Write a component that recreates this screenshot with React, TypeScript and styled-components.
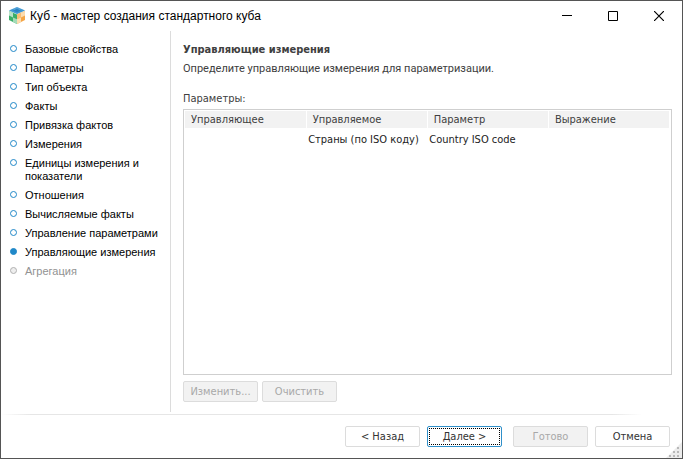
import React from "react";
import styled, { createGlobalStyle, css } from "styled-components";

const GlobalStyle = createGlobalStyle`
  * { box-sizing: border-box; }
  body {
    margin: 0;
    background: #fff;
    font-family: "DejaVu Sans Condensed", "DejaVu Sans", sans-serif;
    font-size: 11px;
    line-height: 13px;
    color: #404040;
  }
  button { font: inherit; }
`;

const Window = styled.div`
  display: flex;
  flex-direction: column;
  min-height: 100vh;
  border: 1px solid #555;
  background: #fff;
  position: relative;
`;

const TitleBar = styled.header`
  display: flex;
  align-items: center;
  height: 29px;
  padding-left: 8px;
`;

const Title = styled.h1`
  flex: 1;
  margin: 0 0 0 5px;
  font: 400 12px/16px "Liberation Sans", sans-serif;
  color: #000;
`;

const CaptionButton = styled.button`
  display: flex;
  align-items: center;
  justify-content: center;
  width: 46px;
  height: 29px;
  padding: 0;
  border: 0;
  background: transparent;
`;

const Body = styled.div`
  display: flex;
  flex: 1;
`;

const Steps = styled.ol`
  display: flex;
  flex-direction: column;
  gap: 6px;
  width: 170px;
  flex-shrink: 0;
  margin: 1px 0 0;
  padding: 12px 0 0 9px;
  list-style: none;
  border-right: 1px solid #dcdcdc;
  font-family: "Liberation Sans", sans-serif;
  font-size: 11px;
`;

type StepState = "done" | "current" | "disabled";

const Step = styled.li<{ $state: StepState }>`
  display: flex;
  gap: 8px;
  color: ${(p) => (p.$state === "disabled" ? "#929292" : "#000")};
`;

const Marker = styled.span<{ $state: StepState }>`
  flex-shrink: 0;
  width: 7px;
  height: 7px;
  margin-top: 2px;
  border-radius: 50%;
  border: 1px solid ${(p) => (p.$state === "disabled" ? "#b0b0b0" : "#2088c8")};
  background: ${(p) => (p.$state === "current" ? "#2088c8" : p.$state === "disabled" ? "#eee" : "#fff")};
`;

const Main = styled.main`
  display: flex;
  flex-direction: column;
  flex: 1;
  padding: 13px 10px 10px 12px;
`;

const Heading = styled.h2`
  margin: 0;
  font-size: 11px;
  line-height: 13px;
  font-weight: 700;
`;

const Description = styled.p`
  margin: 6px 0 17px;
  font-family: Roboto, sans-serif;
`;

const ListLabel = styled.span`
  margin-bottom: 4px;
`;

const ListBox = styled.div`
  flex: 1;
  padding: 1px;
  border: 1px solid #cfcfcf;
`;

const Table = styled.table`
  width: 100%;
  table-layout: fixed;
  border-collapse: collapse;
`;

const HeadCell = styled.th`
  height: 17px;
  padding: 0 0 0 6px;
  text-align: left;
  font-weight: 400;
  background: #f2f2f2;
  background-clip: padding-box;
  border-right: 1px solid #fff;
`;

const Cell = styled.td`
  height: 22px;
  padding: 0 0 0 2px;
  white-space: nowrap;
  color: #222;
`;

const Actions = styled.div`
  display: flex;
  gap: 4px;
  margin-top: 6px;
`;

const Footer = styled.footer`
  display: flex;
  justify-content: flex-end;
  padding: 11px 12px 11px;
`;

const Separator = styled.hr`
  width: calc(100% - 40px);
  height: 1px;
  margin: 2px 0 0;
  border: 0;
  background: linear-gradient(to right, #fff, #e6e6e6 30px, #e6e6e6 calc(100% - 30px), #fff);
`;

const PushButton = styled.button<{ $default?: boolean }>`
  width: 75px;
  height: 21px;
  padding: 0;
  border: 1px solid #dcdcdc;
  border-radius: 2px;
  background: #fff;
  color: #333;
  white-space: nowrap;
  ${(p) =>
    p.$default &&
    css`
      border-color: #2f90ca;
      outline: 1px dotted #000;
      outline-offset: -3px;
    `}
  &:disabled {
    background: #f2f2f2;
    color: #a8a8a8;
  }
`;

const Navigation = styled.div`
  display: flex;
  gap: 7px;
  margin-right: 11px;
`;

const Finish = styled.div`
  display: flex;
  gap: 7px;
`;

const Grip = styled.svg`
  position: absolute;
  right: 0;
  bottom: 0;
`;

const CubeIcon = () => (
  <svg width="16" height="17" viewBox="0 0 16 17" aria-hidden="true">
    <path d="M8 0 16 3.5 8 7 0 3.5Z" fill="#b5dcf1" />
    <path d="M8 0 12 1.8 8 3.5 4 1.8Z" fill="#4f9fd6" />
    <path d="M8 3.5 12 5.3 8 7 4 5.3ZM4 1.8 8 3.5 4 5.3 0 3.5ZM12 1.8 16 3.5 12 5.3 8 3.5Z" fill="#4198d2" />
    <path d="M8 1.8 12 3.5 8 5.3 4 3.5Z" fill="#2b84c2" />
    <path d="M0 4 8 7.5V17L0 13Z" fill="#3aae69" />
    <path d="M0 4 4 5.8V10.5L0 8.6Z" fill="#b9e3c8" />
    <path d="M4 10.5 8 12.2V17L4 15.1Z" fill="#a4dbb8" />
    <path d="M8 7.5 16 4V13L8 17Z" fill="#f5a545" />
    <path d="M8 7.5 12 5.8V10.5L8 12.2Z" fill="#f8bd75" />
    <path d="M12 5.8 16 4V8.6L12 10.5ZM8 12.2 12 10.5V15.1L8 17Z" fill="#fbdcb0" />
  </svg>
);

const steps: { label: string; state: StepState }[] = [
  { label: "Базовые свойства", state: "done" },
  { label: "Параметры", state: "done" },
  { label: "Тип объекта", state: "done" },
  { label: "Факты", state: "done" },
  { label: "Привязка фактов", state: "done" },
  { label: "Измерения", state: "done" },
  { label: "Единицы измерения и показатели", state: "done" },
  { label: "Отношения", state: "done" },
  { label: "Вычисляемые факты", state: "done" },
  { label: "Управление параметрами", state: "done" },
  { label: "Управляющие измерения", state: "current" },
  { label: "Агрегация", state: "disabled" },
];

const columns = ["Управляющее", "Управляемое", "Параметр", "Выражение"];
const rows = [["", "Страны (по ISO коду)", "Country ISO code", ""]];

export default function App() {
  return (
    <Window>
      <GlobalStyle />
      <TitleBar>
        <CubeIcon />
        <Title>Куб - мастер создания стандартного куба</Title>
        <CaptionButton aria-label="Свернуть">
          <svg width="10" height="10"><path d="M0 4.5H10" stroke="#000" /></svg>
        </CaptionButton>
        <CaptionButton aria-label="Развернуть">
          <svg width="10" height="10"><path d="M.5.5h9v9h-9Z" stroke="#000" fill="none" /></svg>
        </CaptionButton>
        <CaptionButton aria-label="Закрыть">
          <svg width="10" height="10"><path d="M0 0 10 10M10 0 0 10" stroke="#000" strokeWidth="1.2" /></svg>
        </CaptionButton>
      </TitleBar>
      <Body>
        <Steps>
          {steps.map((s) => (
            <Step key={s.label} $state={s.state} aria-current={s.state === "current" ? "step" : undefined}>
              <Marker $state={s.state} />
              <span>{s.label}</span>
            </Step>
          ))}
        </Steps>
        <Main>
          <Heading>Управляющие измерения</Heading>
          <Description>Определите управляющие измерения для параметризации.</Description>
          <ListLabel id="parameters-label">Параметры:</ListLabel>
          <ListBox>
            <Table aria-labelledby="parameters-label">
              <thead>
                <tr>{columns.map((c) => <HeadCell key={c}>{c}</HeadCell>)}</tr>
              </thead>
              <tbody>
                {rows.map((r, i) => (
                  <tr key={i}>{r.map((v, j) => <Cell key={j}>{v}</Cell>)}</tr>
                ))}
              </tbody>
            </Table>
          </ListBox>
          <Actions>
            <PushButton disabled>Изменить...</PushButton>
            <PushButton disabled>Очистить</PushButton>
          </Actions>
        </Main>
      </Body>
      <Separator />
      <Footer>
        <Navigation>
          <PushButton>&lt; Назад</PushButton>
          <PushButton $default>Далее &gt;</PushButton>
        </Navigation>
        <Finish>
          <PushButton disabled>Готово</PushButton>
          <PushButton>Отмена</PushButton>
        </Finish>
      </Footer>
      <Grip width="16" height="16" aria-hidden="true">
        <path d="M16 0V16H0Z" fill="#ececec" />
        <path d="M11 5h2v2h-2zM7 9h2v2H7zM11 9h2v2h-2zM3 13h2v2H3zM7 13h2v2H7zM11 13h2v2h-2z" fill="#b8b8b8" />
      </Grip>
    </Window>
  );
}
